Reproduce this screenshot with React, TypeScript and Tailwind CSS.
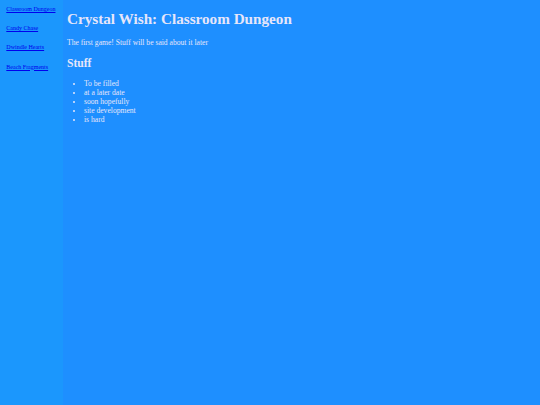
export default function App() {
  const links = ["Classroom Dungeon", "Candy Chase", "Dwindle Hearts", "Beach Fragments"];
  const items = ["To be filled", "at a later date", "soon hopefully", "site development", "is hard"];
  return (
    <div className="flex h-[405px] w-[540px] bg-[#1e8fff] text-[#e6e6fa]" style={{ fontFamily: '"Liberation Serif", serif' }}>
      <nav className="flex w-[63px] shrink-0 flex-col gap-[12.3px] bg-[#1b97fd] pl-[6.3px] pt-[5.8px]">
        {links.map((l) => (
          <a key={l} href="#" className="whitespace-nowrap text-[6px] leading-[7px] text-[#0000ee] underline">
            {l}
          </a>
        ))}
      </nav>
      <main className="flex flex-col pl-[4px] pt-[10px]">
        <h1 className="text-[15.2px] font-bold leading-[normal]">Crystal Wish: Classroom Dungeon</h1>
        <p className="mt-[10.2px] text-[7.6px] leading-[normal]">The first game! Stuff will be said about it later</p>
        <h2 className="mt-[9.5px] text-[11.6px] font-bold leading-[normal]">Stuff</h2>
        <ul className="mt-[10.2px] list-disc pl-[17px] text-[7.6px] leading-[8.9px]">
          {items.map((i) => (
            <li key={i}>{i}</li>
          ))}
        </ul>
      </main>
    </div>
  );
}
